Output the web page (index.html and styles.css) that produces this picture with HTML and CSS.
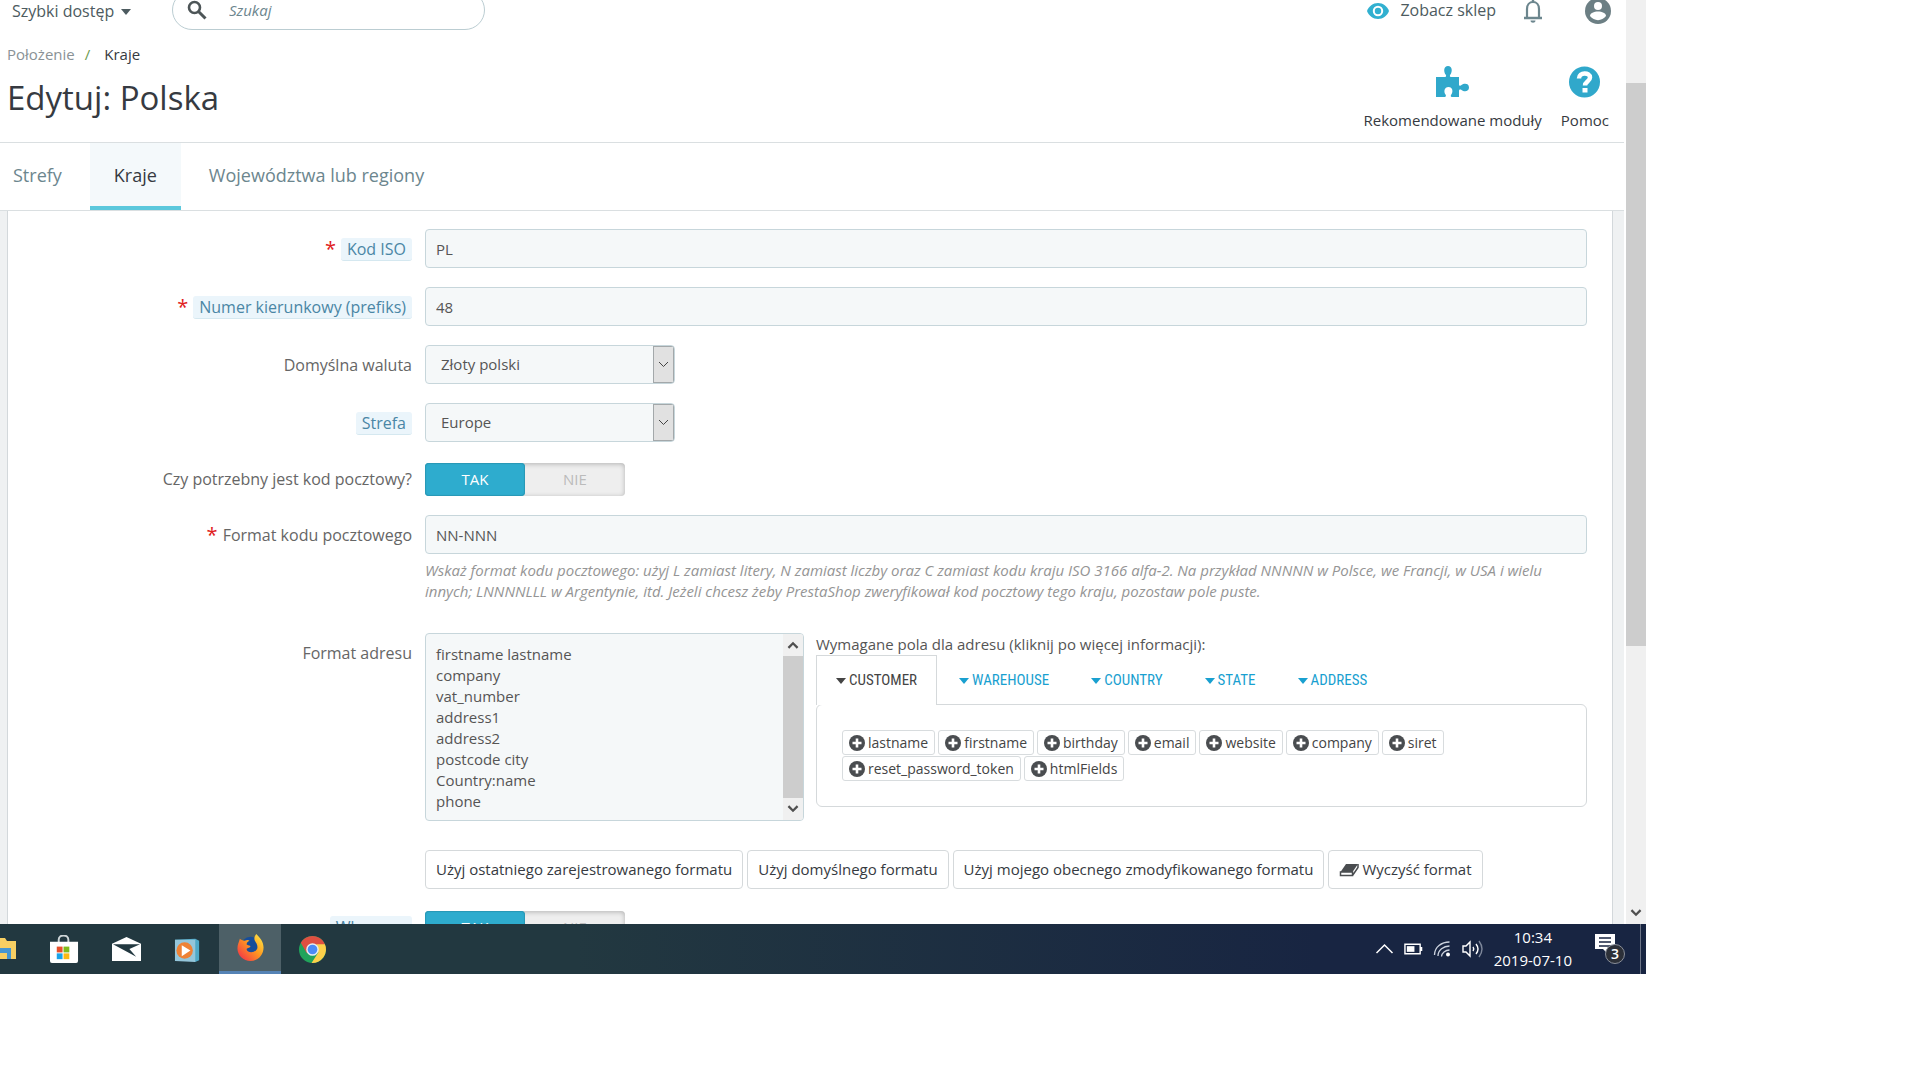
FILE: index.html
```html
<!DOCTYPE html>
<html lang="pl">
<head>
    <meta charset="UTF-8">
    <meta name="viewport" content="width=device-width, initial-scale=1.0">
    <title>Edytuj: Polska</title>
    <link rel="stylesheet" href="styles.css">
</head>
<body>
    <svg class="sprite" aria-hidden="true">
        <symbol id="plus" viewBox="0 0 16 16">
            <circle cx="8" cy="8" r="8" fill="#4a4d50"/>
            <path d="M8 3.500v9M3.500 8h9" stroke="#fff" stroke-width="2.600"/>
        </symbol>
        <symbol id="caret" viewBox="0 0 10 6">
            <path d="M0 0h10L5 6z" fill="currentColor"/>
        </symbol>
    </svg>

    <div class="desktop">
        <div class="browser">
            <div class="page">
                <header>
                    <div class="topbar">
                        <button class="quick">Szybki dostęp <svg class="caret"><use href="#caret"/></svg></button>
                        <div class="search">
                            <svg viewBox="0 0 20 20"><circle cx="7.500" cy="7.500" r="5.500" fill="none" stroke="#4d5557" stroke-width="2.600"/><path d="M11.500 11.500l7 7" stroke="#4d5557" stroke-width="3"/></svg>
                            <input type="text" placeholder="Szukaj" aria-label="Szukaj">
                        </div>
                        <a href="#" class="shop">
                            <svg viewBox="0 0 24 18"><path d="M12 1C7 1 2.700 4.300 1 9c1.700 4.700 6 8 11 8s9.300-3.300 11-8c-1.700-4.700-6-8-11-8z" fill="#31b0d0"/><circle cx="12" cy="9" r="4.200" fill="none" stroke="#fff" stroke-width="2"/></svg>
                            Zobacz sklep
                        </a>
                        <button class="bell" aria-label="Powiadomienia">
                            <svg viewBox="0 0 20 25"><path d="M4 19V11c0-4 2.500-7 6-7s6 3 6 7v8" fill="none" stroke="#6c868e" stroke-width="2.200"/><path d="M1 20h18M10 1v3" stroke="#6c868e" stroke-width="2.400"/><path d="M7.500 22.500h5c0 3-5 3-5 0z" fill="#6c868e"/></svg>
                        </button>
                        <button class="user" aria-label="Konto">
                            <svg viewBox="0 0 26 26"><circle cx="13" cy="13" r="13" fill="#6c7f84"/><circle cx="13" cy="8" r="4" fill="#fff"/><path d="M5 18c0-6 16-6 16 0-4 5.500-12 5.500-16 0z" fill="#fff"/></svg>
                        </button>
                    </div>

                    <div class="heading">
                        <div>
                            <nav class="breadcrumb"><a href="#">Położenie</a><span>/</span><a href="#" class="current">Kraje</a></nav>
                            <h1>Edytuj: Polska</h1>
                        </div>
                        <div class="tools">
                            <a href="#">
                                <svg viewBox="0 0 33 32"><path d="M0 11h9c1.500 0 1.300-1.500.6-2.500C7.500 6 7.500 0 12 0s4.500 6 2.400 8.500c-.7 1-.9 2.500.6 2.500h8v7.500c0 1.500 1.500 1.500 2.500.6 2.500-2 7.500-1.800 7.500 2.400s-5 4.400-7.500 2.400c-1-.8-2.500-.6-2.500 1V31h-7c-1.500 0-1.500-1.500-.7-2.500 2-2.500 1.500-7.500-2.800-7.500s-5 5-3 7.500c.8 1 .5 2.500-1 2.500H0z" fill="#30a8cb"/></svg>
                                Rekomendowane moduły
                            </a>
                            <a href="#">
                                <svg viewBox="0 0 32 32"><circle cx="16" cy="16" r="15.500" fill="#30a8cb"/><path d="M10.500 12.500c0-6.500 11-6.500 11-1 0 4-5 4-5 8" fill="none" stroke="#fff" stroke-width="4.500"/><path d="M14 22h5v4.500h-5z" fill="#fff"/></svg>
                                Pomoc
                            </a>
                        </div>
                    </div>

                    <nav class="tabs">
                        <a href="#">Strefy</a>
                        <a href="#" class="active">Kraje</a>
                        <a href="#">Województwa lub regiony</a>
                    </nav>
                </header>

                <main>
                    <form class="panel">
                        <div class="row">
                            <label for="iso"><i>*</i><span class="hint">Kod ISO</span></label>
                            <input type="text" id="iso" value="PL">
                        </div>
                        <div class="row">
                            <label for="prefix"><i>*</i><span class="hint">Numer kierunkowy (prefiks)</span></label>
                            <input type="text" id="prefix" value="48">
                        </div>
                        <div class="row">
                            <label for="currency">Domyślna waluta</label>
                            <select id="currency"><option>Złoty polski</option></select>
                        </div>
                        <div class="row">
                            <label for="zone"><span class="hint">Strefa</span></label>
                            <select id="zone"><option>Europe</option></select>
                        </div>
                        <div class="row">
                            <span class="label" id="zip-label">Czy potrzebny jest kod pocztowy?</span>
                            <div class="switch" role="radiogroup" aria-labelledby="zip-label">
                                <input type="radio" name="zip" id="zip-on" checked><label for="zip-on">TAK</label>
                                <input type="radio" name="zip" id="zip-off"><label for="zip-off">NIE</label>
                            </div>
                        </div>
                        <div class="row">
                            <label for="zip-format"><i>*</i>Format kodu pocztowego</label>
                            <div>
                                <input type="text" id="zip-format" value="NN-NNN">
                                <p class="help">Wskaż format kodu pocztowego: użyj L zamiast litery, N zamiast liczby oraz C zamiast kodu kraju ISO 3166 alfa-2. Na przykład NNNNN w Polsce, we Francji, w USA i wielu innych; LNNNNLLL w Argentynie, itd. Jeżeli chcesz żeby PrestaShop zweryfikował kod pocztowy tego kraju, pozostaw pole puste.</p>
                            </div>
                        </div>
                        <div class="row address">
                            <label for="format">Format adresu</label>
                            <div class="address-cols">
                                <div class="textbox">
                                    <textarea id="format" rows="8">firstname lastname
company
vat_number
address1
address2
postcode city
Country:name
phone</textarea>
                                    <div class="scroll">
                                        <svg viewBox="0 0 10 7"><path d="M1 6l4-4 4 4" fill="none" stroke="#505050" stroke-width="2"/></svg>
                                        <div class="thumb"></div>
                                        <svg viewBox="0 0 10 7"><path d="M1 1l4 4 4-4" fill="none" stroke="#505050" stroke-width="2"/></svg>
                                    </div>
                                </div>
                                <div class="fields">
                                    <p>Wymagane pola dla adresu (kliknij po więcej informacji):</p>
                                    <div class="field-tabs">
                                        <a href="#" class="active"><svg class="caret"><use href="#caret"/></svg>CUSTOMER</a>
                                        <a href="#"><svg class="caret"><use href="#caret"/></svg>WAREHOUSE</a>
                                        <a href="#"><svg class="caret"><use href="#caret"/></svg>COUNTRY</a>
                                        <a href="#"><svg class="caret"><use href="#caret"/></svg>STATE</a>
                                        <a href="#"><svg class="caret"><use href="#caret"/></svg>ADDRESS</a>
                                    </div>
                                    <div class="field-box">
                                        <button type="button"><svg><use href="#plus"/></svg>lastname</button>
                                        <button type="button"><svg><use href="#plus"/></svg>firstname</button>
                                        <button type="button"><svg><use href="#plus"/></svg>birthday</button>
                                        <button type="button"><svg><use href="#plus"/></svg>email</button>
                                        <button type="button"><svg><use href="#plus"/></svg>website</button>
                                        <button type="button"><svg><use href="#plus"/></svg>company</button>
                                        <button type="button"><svg><use href="#plus"/></svg>siret</button>
                                        <button type="button"><svg><use href="#plus"/></svg>reset_password_token</button>
                                        <button type="button"><svg><use href="#plus"/></svg>htmlFields</button>
                                    </div>
                                </div>
                            </div>
                        </div>
                        <div class="row actions">
                            <span></span>
                            <div class="buttons">
                                <button type="button">Użyj ostatniego zarejestrowanego formatu</button>
                                <button type="button">Użyj domyślnego formatu</button>
                                <button type="button">Użyj mojego obecnego zmodyfikowanego formatu</button>
                                <button type="button"><svg viewBox="0 0 20 14"><path d="M7 1h12l-5.500 8h-12z" fill="#4a4d50"/><path d="M1.500 9h12v3.500h-12zM13.500 12.500L19 4.500V1" fill="none" stroke="#4a4d50" stroke-width="1.500"/></svg>Wyczyść format</button>
                            </div>
                        </div>
                        <div class="row">
                            <span class="label" id="active-label"><span class="hint">Włączony</span></span>
                            <div class="switch" role="radiogroup" aria-labelledby="active-label">
                                <input type="radio" name="enabled" id="enabled-on" checked><label for="enabled-on">TAK</label>
                                <input type="radio" name="enabled" id="enabled-off"><label for="enabled-off">NIE</label>
                            </div>
                        </div>
                    </form>
                </main>
            </div>
            <div class="scroll page-scroll">
                <div class="thumb"></div>
                <svg viewBox="0 0 10 7"><path d="M1 1l4 4 4-4" fill="none" stroke="#505050" stroke-width="2"/></svg>
            </div>
        </div>

        <footer class="taskbar">
            <div class="apps">
                <button class="explorer" aria-label="Eksplorator plików">
                    <svg viewBox="0 0 16 24"><path d="M0 1h5l2 3h9v18H0z" fill="#f7cf63"/><path d="M0 11h11v11H7v-6H0z" fill="#4596d1"/></svg>
                </button>
                <button aria-label="Sklep">
                    <svg viewBox="1 1 30 30"><path d="M10 9V6c0-6 10-6 10 0v3" fill="none" stroke="#cfd6d8" stroke-width="2"/><path d="M1 8h29v20q0 2-2 2H3q-2 0-2-2z" fill="#fff"/><path d="M8 13h6v6H8z" fill="#e8502b"/><path d="M15 13h6v6h-6z" fill="#80bb1a"/><path d="M8 20h6v6H8z" fill="#1ba3e8"/><path d="M15 20h6v6h-6z" fill="#fdb913"/></svg>
                </button>
                <button aria-label="Poczta">
                    <svg viewBox="0 0 30 30"><path d="M0 9l15-7 15 7v18H0z" fill="#fff"/><path d="M1 9.500h28l-11 5 7 8-11-6z" fill="#223840"/></svg>
                </button>
                <button aria-label="Odtwarzacz">
                    <svg viewBox="2 0 30 30"><path d="M3 5l21-1 4 2v20l-4 2z" fill="#4fa9c8"/><path d="M3 5h21v23L3 27z" fill="#94c6db"/><circle cx="13" cy="16" r="8.500" fill="#ee8236"/><path d="M10 10.500l9 5.500-9 6z" fill="#fff"/></svg>
                </button>
                <button class="open" aria-label="Firefox">
                    <svg viewBox="0 0 30 30"><defs><linearGradient id="fox" x1="1" y1="0" x2="0" y2="1"><stop offset="0" stop-color="#fff04a"/><stop offset=".45" stop-color="#ff9a20"/><stop offset="1" stop-color="#f0224f"/></linearGradient></defs><circle cx="15" cy="14" r="10" fill="#164d9b"/><path d="M4 6c1 1 3 2 5 2 2-1 4-1 5 0-2 1-3 2-3 4 1 1 4 1 4 2-1 2-4 1-4 3 1 4 9 4 11-1 1-5-3-7-3-10 0-2 1-4 2-5 4 4 7.500 8 7.500 14 0 8-6 14-13.500 14S1.500 23 1.500 16C1.500 12 3 10 4 6z" fill="url(#fox)"/></svg>
                </button>
                <button aria-label="Chrome">
                    <svg viewBox="0 0 30 30"><circle cx="15" cy="15" r="14" fill="#21a35b"/><path d="M2.900 8A14 14 0 0 1 27.100 8L29 14H15L9 18.500z" fill="#df4f41"/><path d="M27.800 9.500A14 14 0 0 1 14 29l7-11-2-8.500z" fill="#fdd04a"/><circle cx="15" cy="15" r="6.500" fill="#e8eef0"/><circle cx="15" cy="15" r="5" fill="#4c8bf5"/></svg>
                </button>
            </div>
            <div class="tray">
                <svg class="up" viewBox="0 0 18 18"><path d="M1 13l8-8 8 8" fill="none" stroke="#fff" stroke-width="1.500"/></svg>
                <svg viewBox="0 0 20 18"><path d="M1 4h16v10H1zM18.500 7v4" fill="none" stroke="#fff" stroke-width="1.500"/><path d="M3 6h8v6H3z" fill="#fff"/></svg>
                <svg viewBox="0 0 18 18"><path d="M1 15C1 7 8 2 16 2M4.500 16C4.500 10 10 6 16 6M8 16.500C8 13 12 10 16 10" fill="none" stroke="#ccd3df" stroke-width="1.300"/><circle cx="14.500" cy="14.500" r="2" fill="#fff"/></svg>
                <svg class="volume" viewBox="0 0 22 18"><path d="M1 6h3l4-4v14l-4-4H1z" fill="none" stroke="#fff" stroke-width="1.400"/><path d="M11 7q1.500 2 0 4M14 4q4 5 0 10" fill="none" stroke="#fff" stroke-width="1.400"/><path d="M17 1q6 8 0 16" fill="none" stroke="#7d879a" stroke-width="1.400"/></svg>
                <div class="clock"><span>10:34</span><span>2019-07-10</span></div>
                <div class="notes">
                    <svg viewBox="0 0 20 20"><path d="M0 0h20v15h-7v5l-5-5H0z" fill="#fff"/><path d="M4 4h12M4 8h12M4 12h12" stroke="#182542" stroke-width="1.500"/></svg>
                    <span>3</span>
                </div>
            </div>
        </footer>
    </div>
</body>
</html>
```
FILE: styles.css
```css
* {
    box-sizing: border-box;
}
body {
    margin: 0;
    background: #fff;
    font-family: "Open Sans", "Noto Sans", sans-serif;
    font-size: 15px;
    line-height: 21px;
    color: #555;
}
a {
    color: inherit;
    text-decoration: none;
}
button, input, select, textarea {
    font: inherit;
    color: inherit;
}
button {
    border: 0;
    padding: 0;
    background: none;
    cursor: pointer;
}
svg {
    display: block;
    flex: none;
}
.sprite {
    width: 0;
    height: 0;
    position: absolute;
}
.caret {
    width: 10px;
    height: 6px;
}
.desktop {
    display: flex;
    flex-direction: column;
    height: calc(100vh - 106px);
    margin-right: 274px;
    overflow: hidden;
}
.browser {
    flex: 1;
    min-height: 0;
    display: flex;
    gap: 2px;
}
.page {
    flex: 1;
    min-width: 0;
    display: flex;
    flex-direction: column;
    overflow: hidden;
}

/* header */
.topbar {
    display: flex;
    align-items: flex-end;
    height: 30px;
    padding: 0 13px 0 12px;
    font-size: 16px;
    color: #4d5b60;
}
.quick {
    display: flex;
    align-items: center;
    gap: 7px;
    width: 160px;
    padding-bottom: 8px;
}
.search {
    display: flex;
    align-items: center;
    gap: 20px;
    width: 313px;
    height: 40px;
    padding: 0 14px;
    border: 1px solid #bbcdd2;
    border-radius: 20px;
}
.search svg {
    width: 20px;
    height: 20px;
}
.search input {
    flex: 1;
    min-width: 0;
    border: 0;
    outline: 0;
    background: none;
    font-size: 15px;
    font-style: italic;
}
.search input::placeholder {
    color: #6c868e;
}
.shop {
    display: flex;
    align-items: center;
    gap: 10px;
    margin-left: auto;
    padding-bottom: 9px;
}
.shop svg {
    width: 24px;
    height: 18px;
}
.bell {
    margin: 0 42px 7px 27px;
}
.bell svg {
    width: 20px;
    height: 25px;
}
.user {
    margin-bottom: 6px;
}
.user svg {
    width: 26px;
    height: 26px;
}
.heading {
    display: flex;
    justify-content: space-between;
    height: 112px;
    padding: 14px 15px 0 7px;
}
.breadcrumb {
    display: flex;
    color: #8a9296;
}
.breadcrumb span {
    margin: 0 14px 0 10px;
    color: #6c9a4e;
}
.breadcrumb .current {
    color: #363a41;
}
h1 {
    margin: 10px 0 0;
    font-size: 33px;
    line-height: 45px;
    font-weight: 400;
    color: #363a41;
}
.tools {
    display: flex;
    gap: 19px;
    padding-top: 22px;
    color: #363a41;
}
.tools a {
    display: flex;
    flex-direction: column;
    align-items: center;
    gap: 12px;
}
.tools svg {
    width: 33px;
    height: 32px;
}
.tabs {
    display: flex;
    gap: 4px;
    border-top: 1px solid #dadfe1;
    border-bottom: 1px solid #dadfe1;
    font-size: 18px;
    color: #6c868e;
}
.tabs a {
    padding: 22px 24px 20px;
    border-bottom: 4px solid transparent;
}
.tabs a:first-child {
    padding-left: 13px;
}
.tabs .active {
    background: #f4f9fb;
    border-bottom-color: #5bc8dc;
    color: #363a41;
}

/* form */
main {
    flex: 1;
    min-height: 0;
    padding: 0 11px 0 7px;
    background: #eff1f2;
}
.panel {
    display: flex;
    flex-direction: column;
    gap: 19px;
    min-height: 100%;
    padding: 18px 25px 0 17px;
    border: solid #d3d8db;
    border-width: 0 1px;
    background: #fff;
}
.row {
    display: grid;
    grid-template-columns: 387px 1fr;
    column-gap: 13px;
    align-items: start;
}
.row > label, .label {
    display: flex;
    justify-content: flex-end;
    align-items: flex-start;
    gap: 5px;
    padding-top: 9px;
    font-size: 16px;
    line-height: 22px;
    color: #666;
}
.row .label {
    padding-top: 7px;
}
.row i {
    font-size: 20px;
    font-style: normal;
    color: #e02020;
}
.hint {
    padding: 0 6px;
    border-bottom: 1px solid #d5e8f0;
    border-radius: 3px;
    background: #ebf5fb;
    color: #4a86a5;
}
.row input[type=text], select {
    width: 100%;
    height: 39px;
    padding: 0 10px;
    border: 1px solid #c7d6db;
    border-radius: 4px;
    background: #f5f8f9;
}
.row div > input[type=text] {
    display: block;
}
select {
    appearance: none;
    background: #f5f8f9 url("data:image/svg+xml,%3Csvg xmlns='http://www.w3.org/2000/svg' width='21' height='37'%3E%3Crect x='.5' y='.5' width='20' height='36' fill='%23e1e1e1' stroke='%23a3a8aa'/%3E%3Cpath d='M6 16l4.500 4.500 4.500-4.500' fill='none' stroke='%23444'/%3E%3C/svg%3E") no-repeat right center;
}
.row select {
    width: 250px;
    padding: 0 15px;
}
.switch {
    display: flex;
    width: 200px;
    height: 33px;
    margin-top: 2px;
    border-radius: 4px;
    background: #eee;
    box-shadow: inset 0 1px 5px rgba(0, 0, 0, 0.25);
}
.switch input {
    position: absolute;
    opacity: 0;
}
.switch label {
    flex: 1;
    line-height: 33px;
    text-align: center;
    color: #bbb;
}
.switch input:checked + label {
    border-radius: 4px;
    background: #2eacce;
    box-shadow: inset 0 0 1px 1px #2897b5;
    color: #fff;
}
.help {
    margin: 6px 0 0;
    padding-right: 12px;
    font-style: italic;
    color: #959595;
}
.address {
    margin-top: 12px;
}
.address-cols {
    display: grid;
    grid-template-columns: 379px 1fr;
    gap: 12px;
    align-items: start;
}
.textbox {
    display: flex;
    height: 188px;
    border: 1px solid #c7d6db;
    border-radius: 4px;
    background: #f5f8f9;
    overflow: hidden;
}
textarea {
    flex: 1;
    padding: 10px;
    border: 0;
    outline: 0;
    background: none;
    resize: none;
    overflow: hidden;
}
.scroll {
    display: flex;
    flex-direction: column;
    align-items: center;
    justify-content: space-between;
    width: 20px;
    padding: 7px 0;
    background: #f0f0f0;
}
.scroll svg {
    width: 12px;
    height: 8px;
}
.thumb {
    width: 100%;
    height: 142px;
    background: #cdcdcd;
}
.page-scroll {
    padding-top: 83px;
}
.page-scroll .thumb {
    height: 563px;
}
.fields p {
    margin: 0;
    padding-top: 1px;
}
.field-tabs {
    display: flex;
    height: 50px;
    font-family: "Ubuntu Condensed", "Roboto Condensed", "Open Sans", sans-serif;
    color: #19a0d0;
}
.field-tabs a {
    display: flex;
    align-items: center;
    gap: 3px;
    padding: 0 19px;
    border: 1px solid transparent;
    border-bottom: 0;
    margin-right: 2px;
}
.field-tabs .active {
    border-color: #d5d9db;
    background: #fff;
    color: #444;
}
.field-box {
    display: flex;
    flex-wrap: wrap;
    gap: 1px 3px;
    align-content: flex-start;
    height: 103px;
    margin-top: -1px;
    padding: 25px;
    border: 1px solid #d5d9db;
    border-radius: 6px;
}
.field-box button {
    display: flex;
    align-items: center;
    gap: 3px;
    height: 25px;
    padding: 0 6px;
    border: 1px solid #d8dcde;
    border-radius: 3px;
    font-size: 14px;
    color: #444;
}
.field-box svg {
    width: 16px;
    height: 16px;
}
.actions {
    margin: 10px 0 1px;
}
.buttons {
    display: flex;
    gap: 4px;
}
.buttons button {
    display: flex;
    align-items: center;
    gap: 3px;
    height: 39px;
    padding: 0 10px;
    border: 1px solid #d5d9db;
    border-radius: 4px;
    color: #363a41;
}
.buttons svg {
    width: 20px;
    height: 14px;
}

/* taskbar */
.taskbar {
    display: flex;
    justify-content: space-between;
    height: 50px;
    background: linear-gradient(90deg, #223840 35%, #182542 80%);
    color: #fff;
}
.apps {
    display: flex;
}
.apps button {
    display: flex;
    align-items: center;
    justify-content: center;
    width: 62px;
}
.apps svg {
    width: 29px;
    height: 29px;
}
.apps .explorer {
    justify-content: flex-start;
    width: 33px;
}
.apps .explorer svg {
    width: 16px;
    height: 24px;
}
.apps .open {
    background: #4d6067;
    border-bottom: 3px solid #5583b5;
}
.tray {
    display: flex;
    align-items: center;
    gap: 10px;
    margin-right: 5px;
    padding-right: 15px;
    border-right: 1px solid #6d7587;
}
.tray svg {
    width: 19px;
    height: 18px;
}
.tray .volume {
    width: 22px;
}
.clock {
    display: flex;
    flex-direction: column;
    text-align: center;
    line-height: 23px;
}
.notes {
    position: relative;
    width: 30px;
    height: 30px;
    margin-left: 13px;
}
.tray .notes svg {
    width: 20px;
    height: 20px;
}
.notes span {
    position: absolute;
    right: 0;
    bottom: 0;
    width: 20px;
    height: 20px;
    border: 1px solid #8a8f99;
    border-radius: 50%;
    background: #2c3038;
    font-size: 14px;
    line-height: 18px;
    font-weight: 600;
    text-align: center;
}
```
